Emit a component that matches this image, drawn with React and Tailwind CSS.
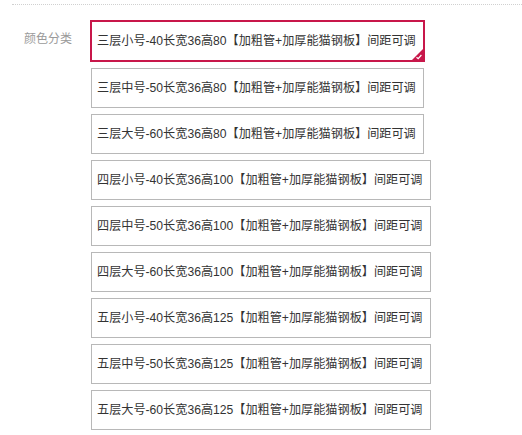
const OPTIONS = [
  "三层小号-40长宽36高80【加粗管+加厚能猫钢板】间距可调",
  "三层中号-50长宽36高80【加粗管+加厚能猫钢板】间距可调",
  "三层大号-60长宽36高80【加粗管+加厚能猫钢板】间距可调",
  "四层小号-40长宽36高100【加粗管+加厚能猫钢板】间距可调",
  "四层中号-50长宽36高100【加粗管+加厚能猫钢板】间距可调",
  "四层大号-60长宽36高100【加粗管+加厚能猫钢板】间距可调",
  "五层小号-40长宽36高125【加粗管+加厚能猫钢板】间距可调",
  "五层中号-50长宽36高125【加粗管+加厚能猫钢板】间距可调",
  "五层大号-60长宽36高125【加粗管+加厚能猫钢板】间距可调",
];

export default function App() {
  const selected = 0;

  return (
    <div
      className="w-[522px] h-[435px] bg-white overflow-hidden"
      style={{ fontFamily: '"Liberation Sans", "Noto Sans CJK SC", sans-serif' }}
    >
      <div className="ml-[12px] mt-[4px] border-t border-dotted border-[#d0d0d0]" />
      <div className="flex pt-[15px]">
        {/* label */}
        <div className="w-[90px] pl-[24px] pt-[12px] text-[12px] leading-[14px] text-[#9a9a9a]">
          颜色分类
        </div>

        {/* options */}
        <ul className="flex flex-col gap-[6px] items-start">
          {OPTIONS.map((opt, i) => {
            const isSelected = i === selected;
            return (
              <li
                key={opt}
                className={`relative flex items-center text-[12.15px] text-[#333] whitespace-nowrap bg-white pl-[5px] pr-[7px] ${
                  isSelected
                    ? "h-[42px] border-2 border-[#c8174a]"
                    : "h-[40px] ml-px border border-[#b8b8b8]"
                }`}
              >
                {opt}
                {isSelected && (
                  <span className="absolute right-0 bottom-0 w-[11px] h-[11px]">
                    <svg width="11" height="11" viewBox="0 0 11 11">
                      <path d="M11 0 L11 11 L0 11 Z" fill="#c8174a" />
                      <path d="M4.5 8.2 L6.2 9.6 L9.4 6" stroke="#fff" strokeWidth="1.2" fill="none" />
                    </svg>
                  </span>
                )}
              </li>
            );
          })}
        </ul>
      </div>
    </div>
  );
}
